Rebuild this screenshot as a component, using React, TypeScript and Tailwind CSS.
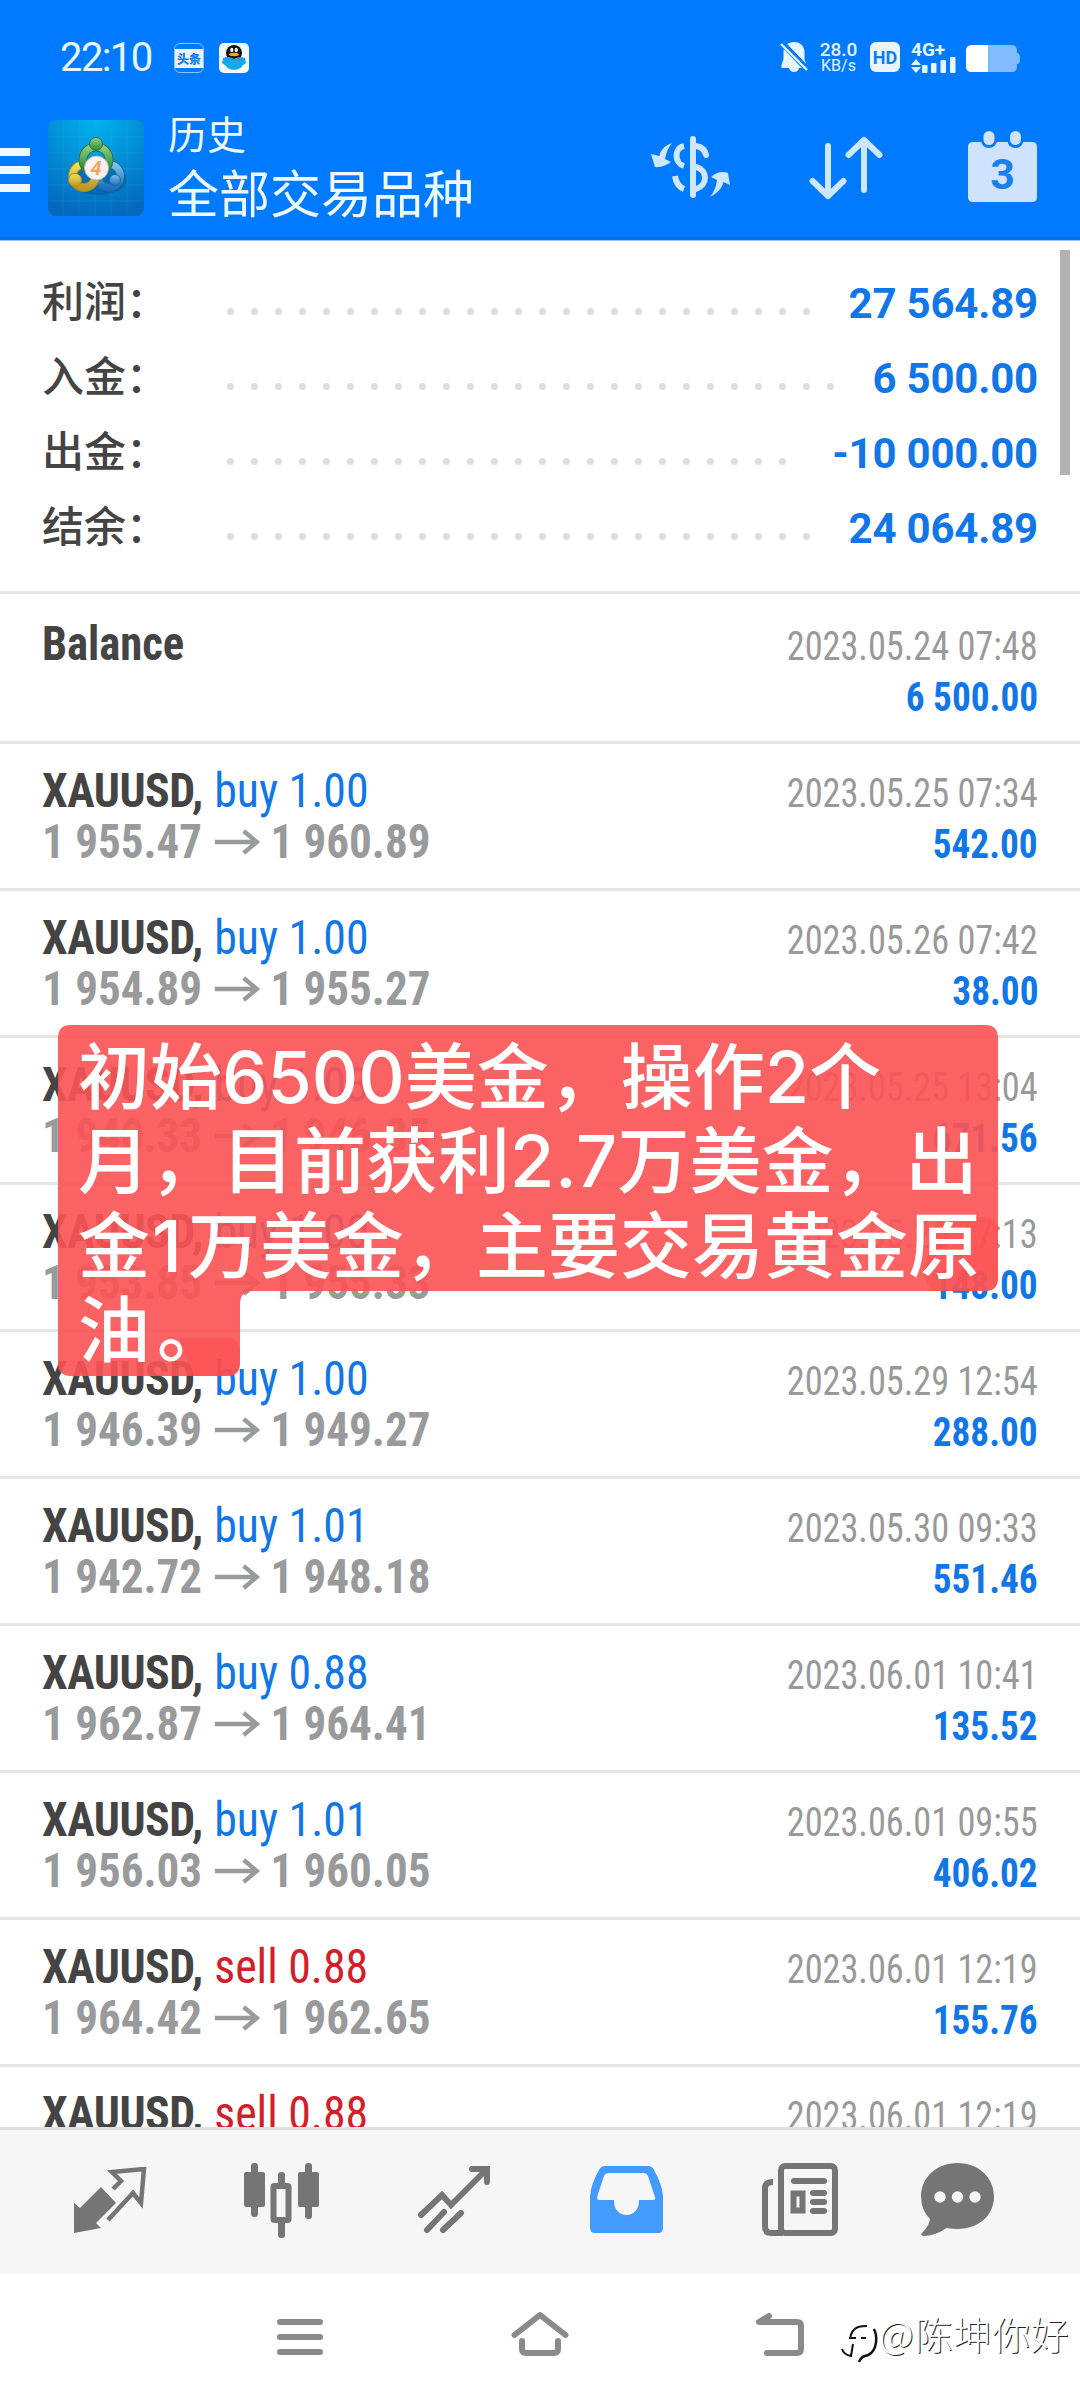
const summary = [
  { label: "利润：", value: "27 564.89", dots: 25 },
  { label: "入金：", value: "6 500.00", dots: 26 },
  { label: "出金：", value: "-10 000.00", dots: 24 },
  { label: "结余：", value: "24 064.89", dots: 25 },
];

const deals = [
  { side: "buy", volume: "1.00", open: "1 955.47", close: "1 960.89", time: "2023.05.25 07:34", profit: "542.00" },
  { side: "buy", volume: "1.00", open: "1 954.89", close: "1 955.27", time: "2023.05.26 07:42", profit: "38.00" },
  { side: "buy", volume: "1.03", open: "1 940.33", close: "1 946.85", time: "2023.05.25 13:04", profit: "671.56" },
  { side: "buy", volume: "1.00", open: "1 953.85", close: "1 955.33", time: "2023.05.26 17:13", profit: "148.00" },
  { side: "buy", volume: "1.00", open: "1 946.39", close: "1 949.27", time: "2023.05.29 12:54", profit: "288.00" },
  { side: "buy", volume: "1.01", open: "1 942.72", close: "1 948.18", time: "2023.05.30 09:33", profit: "551.46" },
  { side: "buy", volume: "0.88", open: "1 962.87", close: "1 964.41", time: "2023.06.01 10:41", profit: "135.52" },
  { side: "buy", volume: "1.01", open: "1 956.03", close: "1 960.05", time: "2023.06.01 09:55", profit: "406.02" },
  { side: "sell", volume: "0.88", open: "1 964.42", close: "1 962.65", time: "2023.06.01 12:19", profit: "155.76" },
  { side: "sell", volume: "0.88", open: "1 964.42", close: "1 962.65", time: "2023.06.01 12:19", profit: "155.76" },
];

function StatusBar() {
  return (
    <div className="flex h-[116px] items-start justify-between pt-[42px] pr-[60px] pl-[60px] text-[#e8f5ff]">
      <div className="flex items-center">
        <span className="w-[114px] font-['Roboto'] text-[40px] leading-[32px] tracking-[-1.6px]">22:10</span>
        <div className="flex h-[30px] w-[30px] flex-col items-center justify-center rounded-md border border-[#8ec4ff]">
          <span className="w-full bg-[#e8f5ff] text-center font-['Noto_Sans_CJK_SC'] text-[12px] leading-[19px] font-black text-[#1b7be0]">
            头条
          </span>
        </div>
        <svg className="ml-[15px]" width="30" height="30" viewBox="0 0 30 30">
          <rect width="30" height="30" rx="5" fill="#f4fbff" />
          <circle cx="15" cy="10" r="8" fill="#111" />
          <path d="M4 15c4-2 8-1 11 1 3-2 7-3 11-1l1 5-4 3c-2 5-14 5-16 0l-4-3z" fill="#16a9ea" />
          <ellipse cx="12.8" cy="7" rx="1.6" ry="2.3" fill="#fff" />
          <ellipse cx="17.2" cy="7" rx="1.6" ry="2.3" fill="#fff" />
          <ellipse cx="15" cy="11.5" rx="5" ry="1.7" fill="#f5a623" />
          <circle cx="19.5" cy="16.5" r="1.5" fill="#e0506a" />
        </svg>
      </div>

      <div className="flex items-start">
        <svg width="28" height="30" viewBox="0 0 28 30" fill="currentColor">
          <path d="M14 0c6 0 10.500 4 10.500 10v7l2 6v3H19c-.5 2.500-2.500 4-5 4s-4.500-1.500-5-4H1.500v-3l2-6v-7c0-6 4.500-10 10.500-10z" />
          <path d="M1 0l27 28" stroke="#007aff" strokeWidth="6" />
          <path d="M1 2l26 26" stroke="currentColor" strokeWidth="2.400" />
        </svg>
        <div className="ml-[10px] flex w-[41px] flex-col items-center font-['Roboto'] leading-[15px]">
          <span className="text-[19px] font-medium">28.0</span>
          <span className="text-[16px] leading-[17px]">KB/s</span>
        </div>
        <div className="ml-[11px] flex h-[30px] w-[30px] items-center justify-center rounded-md bg-[#e8f5ff] font-['Roboto'] text-[18px] font-bold text-[#0f7cf5]">
          HD
        </div>
        <div className="ml-[11px] flex w-[46px] flex-col">
          <span className="font-['Roboto'] text-[19px] leading-[15px] font-bold">4G+</span>
          <svg width="46" height="16" viewBox="0 0 46 16" fill="currentColor">
            <path d="M0 8l5-6 5 6zM0 10l5 6 5-6z" />
            <rect x="11" y="8" width="5.500" height="8" rx="1" />
            <rect x="20" y="6" width="5.500" height="10" rx="1" />
            <rect x="29.500" y="3" width="5.500" height="13" rx="1" />
            <rect x="39" y="0" width="5.500" height="16" rx="1" />
          </svg>
        </div>
        <svg className="mt-[3px] ml-[9px]" width="54" height="27" viewBox="0 0 54 27">
          <path d="M6 0h40q5 0 5 6v2q3 0 3 5.500t-3 5.500v2q0 6-5 6H6q-6 0-6-6V6q0-6 6-6z" fill="#80bcff" />
          <path d="M6 0h16v27H6q-6 0-6-6V6q0-6 6-6z" fill="#fff" />
        </svg>
      </div>
    </div>
  );
}

function MetaTraderLogo() {
  return (
    <svg width="96" height="96" viewBox="0 0 96 96">
      <defs>
        <radialGradient id="tile" cx=".5" cy="0" r="1">
          <stop offset="0" stopColor="#00b4ee" />
          <stop offset=".6" stopColor="#0386cf" />
          <stop offset="1" stopColor="#0468bd" />
        </radialGradient>
        <linearGradient id="green" x2="0" y2="1">
          <stop offset="0" stopColor="#8fcf7f" />
          <stop offset="1" stopColor="#2f8a3c" />
        </linearGradient>
        <linearGradient id="yellow" x2="0" y2="1">
          <stop offset="0" stopColor="#efe25a" />
          <stop offset="1" stopColor="#bb9a22" />
        </linearGradient>
        <linearGradient id="blue" x2="0" y2="1">
          <stop offset="0" stopColor="#7cc3ee" />
          <stop offset="1" stopColor="#1d70bb" />
        </linearGradient>
      </defs>
      <rect width="96" height="96" rx="8" fill="url(#tile)" />
      <path d="M15 0v96M31 0v96M47 0v96M63 0v96M79 0v96M0 17h96M0 33h96M0 49h96M0 65h96M0 81h96" stroke="#3fb4ee" strokeOpacity=".2" />
      <ellipse cx="50" cy="60" rx="29" ry="15" fill="#044f8e" opacity=".45" />
      <g fill="none">
        <circle cx="61" cy="56" r="11.5" stroke="#1b66a6" strokeWidth="9" />
        <circle cx="61" cy="56" r="11.5" stroke="url(#blue)" strokeWidth="7" />
        <circle cx="36" cy="56" r="11.5" stroke="#a88a1e" strokeWidth="9" />
        <circle cx="36" cy="56" r="11.5" stroke="url(#yellow)" strokeWidth="7" />
        <path d="M38 48a13 13 0 1 1 20 0" stroke="#28753a" strokeWidth="9" />
        <path d="M38 48a13 13 0 1 1 20 0" stroke="url(#green)" strokeWidth="7" />
      </g>
      <circle cx="48" cy="24" r="6.500" fill="url(#green)" stroke="#28753a" />
      <circle cx="27" cy="60" r="6.500" fill="url(#yellow)" stroke="#a88a1e" />
      <circle cx="67" cy="60" r="5.500" fill="url(#blue)" stroke="#1b66a6" />
      <circle cx="48.500" cy="48" r="12" fill="#f6f1f2" stroke="#b5b9b4" />
      <text x="48" y="55" textAnchor="middle" fontSize="20" fontStyle="italic" fontWeight="700" fontFamily="Roboto" fill="#f2a85c">
        4
      </text>
    </svg>
  );
}

function AppBar() {
  return (
    <div className="flex h-[124px] items-start border-b-3 border-[#0070e0]">
      <div className="mt-[32px] flex w-[30px] flex-col gap-[10px]">
        <div className="h-[8px] bg-[#eef8ff]" />
        <div className="h-[8px] bg-[#eef8ff]" />
        <div className="h-[8px] bg-[#eef8ff]" />
      </div>
      <div className="mt-[4px] ml-[18px]">
        <MetaTraderLogo />
      </div>
      <div className="ml-[24px] flex flex-1 flex-col font-['Noto_Sans_CJK_SC'] text-[#eef8ff]">
        <span className="text-[39px] leading-[33px]">历史</span>
        <span className="mt-[12px] text-[51px] leading-[60px]">全部交易品种</span>
      </div>

      <svg className="mt-[20px]" width="80" height="62" viewBox="0 0 80 62" fill="none" stroke="#cfe6ff" strokeWidth="6">
        <path d="M42 3v56" strokeLinecap="round" />
        <path d="M33 10c-10 2-10 17 0 20M24 40c1 7 4 11 9 13" />
        <path d="M45 10c6 1 9 4 10 9M45 31c12 3 12 18 0 22" strokeLinecap="round" />
        <path d="M21 7C13 10 9 15 8.500 20L0 18l4 13q8 1 16-5l-6-3c1-6 3-11 7-16zM59 61c8-4 12-9 13.500-15l6.500 3-2-12q-9-3-17 4l6 3c-1 7-3 12-7 17z" fill="#cfe6ff" stroke="none" />
      </svg>
      <svg className="mt-[20px] ml-[78px]" width="76" height="64" viewBox="0 0 76 64" fill="none" stroke="#cfe6ff" strokeWidth="6" strokeLinecap="round" strokeLinejoin="round">
        <path d="M19 10v50M3.500 45L19 60l15.500-15M55 54V4M39.500 19L55 4l15.500 15" />
      </svg>
      <div className="relative mt-[15px] mr-[43px] ml-[83px]">
        <svg width="69" height="72" viewBox="0 0 69 72" fill="#cfe3ff">
          <path d="M5 11h9c0 7 14 7 14 0h12c0 7 14 7 14 0h10q5 0 5 5v50q0 5-5 5H5q-5 0-5-5V16q0-5 5-5z" />
          <rect x="13" y="-2" width="16" height="19" rx="8" fill="#007aff" />
          <rect x="39.500" y="-2" width="16" height="19" rx="8" fill="#007aff" />
          <rect x="15.500" y="0" width="11" height="14" rx="5.500" />
          <rect x="42" y="0" width="11" height="14" rx="5.500" />
        </svg>
        <span className="absolute inset-x-0 top-[21px] text-center font-['Roboto'] text-[43px] leading-[44px] font-bold text-[#1a80ee]">3</span>
      </div>
    </div>
  );
}

function Summary() {
  return (
    <div className="relative h-[354px] shrink-0 border-t border-b-3 border-[#e5e5e5] border-t-[#90c8ff] pt-[23px] pr-[42px] pl-[42px]">
      {summary.map((row) => (
        <div key={row.label} className="flex h-[75px] items-center">
          <span className="w-[185px] pb-[6px] font-['Noto_Sans_CJK_SC'] text-[42px] leading-[60px] font-medium text-[#444]">
            {row.label}
          </span>
          <div className="mt-[19px] flex gap-[17px]">
            {Array.from({ length: row.dots }, (_, i) => (
              <i key={i} className="h-[7px] w-[7px] rounded-full bg-[#dedede]" />
            ))}
          </div>
          <span className="ml-auto pt-[3px] font-['Roboto'] text-[42px] font-bold tracking-[-0.2px] text-[#1177e8]">{row.value}</span>
        </div>
      ))}
      <div className="absolute top-[9px] right-[10px] h-[225px] w-[10px] bg-[#b3b3b3]" />
    </div>
  );
}

function Amounts({ time, profit }: { time: string; profit: string }) {
  return (
    <div className="flex flex-col items-end pt-[24px] text-[40px] leading-[51px]">
      <span className="origin-right scale-x-[.907] text-[#999]">{time}</span>
      <span className="origin-right scale-x-[.932] font-bold text-[#1177e8]">{profit}</span>
    </div>
  );
}

function DealRow({ deal }: { deal: (typeof deals)[number] }) {
  return (
    <div className="flex h-[147px] shrink-0 justify-between border-b-3 border-[#e5e5e5] px-[42px] font-['Roboto_Condensed',Roboto]">
      <div className="flex flex-col items-start pt-[21px] text-[48px] leading-[51px]">
        <div className="flex origin-left scale-x-[.955] gap-[12px]">
          <span className="font-bold tracking-[-0.5px] text-[#444]">XAUUSD,</span>
          <span className={deal.side === "buy" ? "text-[#1177e8]" : "text-[#d1202a]"}>
            {deal.side} {deal.volume}
          </span>
        </div>
        <div className="flex origin-left scale-x-[.938] items-center font-bold text-[#999a9c]">
          <span>{deal.open}</span>
          <svg className="mr-[11px] ml-[13px]" width="49" height="26" viewBox="0 0 49 26" fill="none" stroke="currentColor" strokeWidth="4.500">
            <path d="M0 13h46M31 2l14 11-14 11" />
          </svg>
          <span>{deal.close}</span>
        </div>
      </div>
      <Amounts time={deal.time} profit={deal.profit} />
    </div>
  );
}

function Caption() {
  return (
    <div className="absolute top-[1025px] left-[58px] w-[940px]">
      <svg className="absolute top-0 left-0" width="940" height="351" viewBox="0 0 940 351">
        <path
          d="M13 0H927q13 0 13 13V253q0 13-13 13H195q-13 0-13 13v59q0 13-13 13H13q-13 0-13-13V13Q0 0 13 0z"
          fill="#fb5254"
          fillOpacity=".91"
        />
        <path d="M122 313h47q13 0 13 13v12q0 13-13 13h-35z" fill="#ff3a3e" fillOpacity=".3" />
        <path d="M882 192h45q13 0 13 13v48q0 13-13 13h-50q-10-6-12-20z" fill="#ff4a4e" fillOpacity=".35" />
      </svg>
      <div className="relative flex flex-col pt-[10px] pl-[20px] font-['Inter','Noto_Sans_CJK_SC',sans-serif] text-[72px] leading-[84.3px] font-medium whitespace-nowrap text-white">
        <span>初始6500美金，操作2个</span>
        <span>
          月，目前获利<span className="tracking-[0.5px]">2.7</span>万美金，出
        </span>
        <span>
          金<span className="mr-[6px] ml-[2px]">1</span>万美金，主要交易黄金原
        </span>
        <span>
          油<span className="ml-[7px]">。</span>
        </span>
      </div>
    </div>
  );
}

function TabBar() {
  return (
    <div className="flex h-[147px] shrink-0 items-start border-t-3 border-[#e0e0e0] bg-[#f6f6f6] pt-[33px] pl-[74px] text-[#757575]">
      <svg className="mt-[4px]" width="74" height="76" viewBox="0 0 74 76">
        <path d="M0 36l6 5 21-21 15 16-20 20 5 5-27 5z" fill="currentColor" />
        <path d="M39 22l8-8-9-9 32-3-3 34-8-10-25 27" fill="none" stroke="currentColor" strokeWidth="4.500" />
      </svg>
      <svg className="ml-[96px]" width="76" height="76" viewBox="0 0 76 76" fill="currentColor">
        <rect x="7" y="0" width="7" height="54" rx="3" />
        <rect x="0" y="9" width="21" height="35" rx="2" />
        <rect x="34" y="9" width="7" height="66" rx="3" />
        <rect x="29.500" y="23" width="15" height="34" rx="1" fill="#f6f6f6" stroke="currentColor" strokeWidth="6" />
        <rect x="61" y="0" width="7" height="56" rx="3" />
        <rect x="54" y="9" width="21" height="35" rx="2" />
      </svg>
      <svg className="ml-[98px]" width="72" height="76" viewBox="0 0 72 76" fill="none" stroke="currentColor" strokeWidth="6" strokeLinecap="round">
        <path d="M3 52l21-20 9 10L68 7M54 6h15v13M9 67l17-18M25 67l18-17" />
      </svg>
      <svg className="mt-[3px] ml-[100px]" width="73" height="68" viewBox="0 0 73 68">
        <path
          fillRule="evenodd"
          d="M15 0h43q4 0 6 4 8 14 9 26v32q0 5-5 5H5q-5 0-5-5V30Q1 18 9 4q2-4 6-4zM19 7q-4 0-5 3L8 28q-2 6 1 6h15c-1 20 26 20 25 0h14q3 0 2-3l-7-21q-1-3-5-3z"
          fill="#449bff"
        />
      </svg>
      <svg className="ml-[99px]" width="77" height="74" viewBox="0 0 77 74" fill="none" stroke="currentColor" strokeWidth="6">
        <rect x="19" y="3" width="54" height="67" rx="4" />
        <path d="M11 19q-8 0-8 6v38q0 7 6 7h12" />
        <path d="M32 18h30M51 30h11M51 39h11M51 48h11" strokeLinecap="round" />
        <rect x="31.500" y="30.500" width="9" height="17" />
      </svg>
      <svg className="ml-[82px]" width="73" height="74" viewBox="0 0 73 74">
        <path d="M36.500 0C58 0 73 15 73 33.500S58 66 36.500 66q-6 0-11-1Q14 73 2 73q-3-1-1-3 7-7 8-14Q0 47 0 33.500C0 15 15 0 36.500 0z" fill="currentColor" />
        <g fill="#f6f6f6">
          <circle cx="19" cy="34" r="5.700" />
          <circle cx="36.500" cy="34" r="5.700" />
          <circle cx="54" cy="34" r="5.700" />
        </g>
      </svg>
    </div>
  );
}

function NavBar() {
  return (
    <div className="flex h-[126px] shrink-0 items-start bg-white pt-[36px] pl-[277px] text-[#8a8a8a]">
      <div className="mt-[9px] flex w-[46px] flex-col gap-[9px]">
        <div className="h-[6px] rounded-full bg-[#8a8a8a]" />
        <div className="h-[6px] rounded-full bg-[#8a8a8a]" />
        <div className="h-[6px] rounded-full bg-[#8a8a8a]" />
      </div>
      <svg className="ml-[188px]" width="58" height="48" viewBox="0 0 58 48" fill="none" stroke="currentColor" strokeWidth="6" strokeLinecap="round" strokeLinejoin="round">
        <path d="M3.500 25L29 5l25.500 20M11 31v8q0 4 4 4h28q4 0 4-4v-8" />
      </svg>
      <svg className="ml-[186px]" width="50" height="48" viewBox="0 0 50 48" fill="none" stroke="currentColor" strokeWidth="6" strokeLinecap="round" strokeLinejoin="round">
        <path d="M14 6L4 12h38q4 0 4 4v23q0 4-4 4H12" />
      </svg>
      <div className="ml-[36px] flex items-start">
        <svg className="mt-[11px]" width="38" height="44" viewBox="0 0 38 44" fill="none" strokeWidth="2" stroke="#111">
          <path d="M1 28q2 6 9 7l2-12M8 17h7M20 17h5M9 18q1-9 8-12 4-1 9-1" />
          <path d="M33 8q4 8 1 18-3 8-10 9-4 1-6 6" strokeWidth="2.500" />
        </svg>
        <span className="mt-px font-['Noto_Sans_CJK_SC'] text-[38px] leading-[44px] font-light tracking-[0.8px] whitespace-nowrap text-white [text-shadow:1px_1px_0_#222]">
          @陈坤你好
        </span>
      </div>
    </div>
  );
}

export default function App() {
  return (
    <div className="relative flex h-[2400px] w-[1080px] flex-col overflow-hidden bg-white">
      <header className="h-[240px] shrink-0 bg-[#007aff]">
        <StatusBar />
        <AppBar />
      </header>
      <main className="flex h-[1887px] flex-col overflow-hidden">
        <Summary />
        <div className="flex h-[150px] shrink-0 justify-between border-b-3 border-[#e5e5e5] px-[42px] pt-[3px] font-['Roboto_Condensed',Roboto]">
          <span className="origin-left scale-x-[.93] pt-[21px] text-[48px] leading-[51px] font-bold text-[#444]">Balance</span>
          <Amounts time="2023.05.24 07:48" profit="6 500.00" />
        </div>
        {deals.map((deal, i) => (
          <DealRow key={i} deal={deal} />
        ))}
      </main>
      <TabBar />
      <NavBar />
      <Caption />
    </div>
  );
}
